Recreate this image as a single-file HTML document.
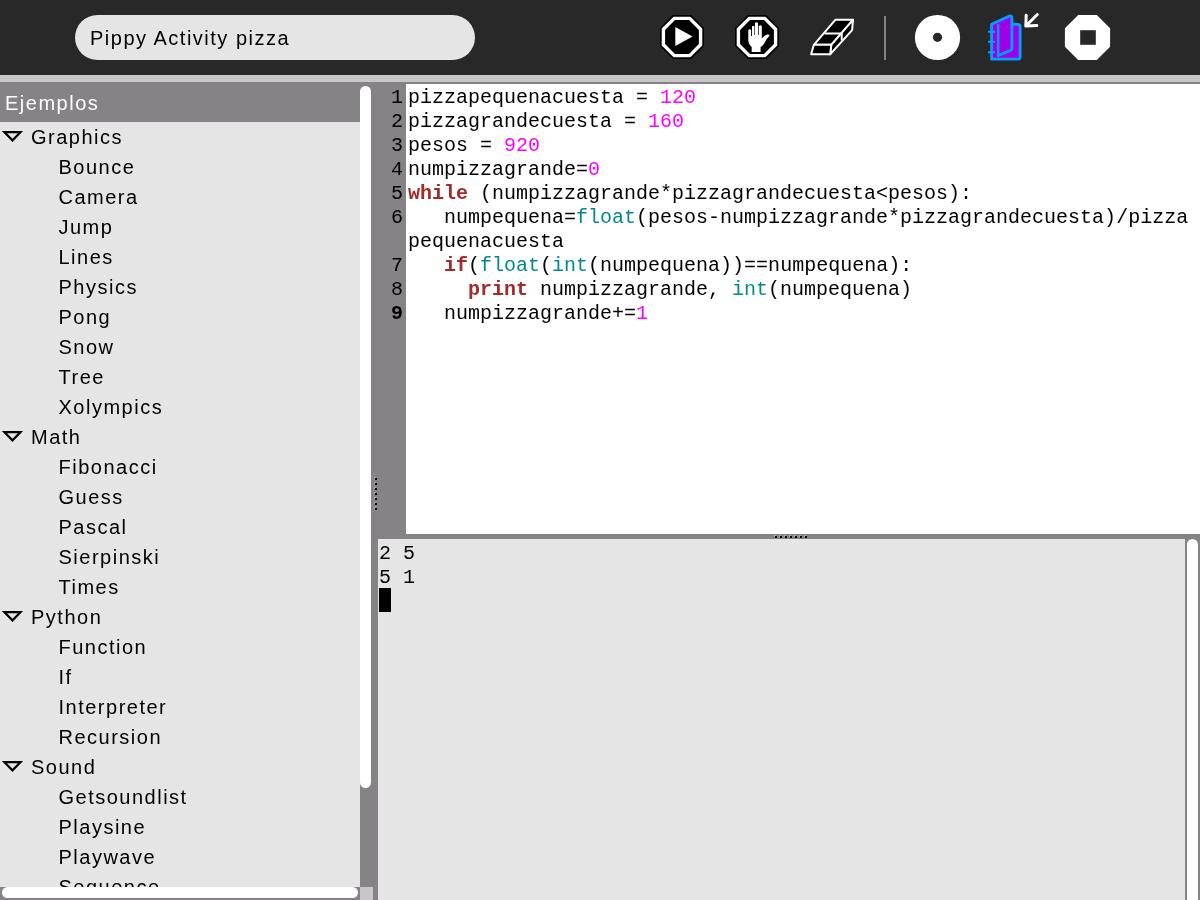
<!DOCTYPE html>
<html><head><meta charset="utf-8">
<style>
*{margin:0;padding:0;box-sizing:border-box}
html,body{width:1200px;height:900px;overflow:hidden;background:#868386;position:relative;font-family:"Liberation Sans",sans-serif}
.abs{position:absolute}
.code,.row,#hdr,#entrytxt,.ln{will-change:transform}
#toolbar{left:0;top:0;width:1200px;height:75px;background:#282828}
#strip{left:0;top:75px;width:1200px;height:7px;background:#c8c6c8}
#entry{left:75px;top:15px;width:400px;height:45px;border-radius:22.5px;background:#e5e5e5}
#entrytxt{left:90px;top:16px;height:45px;line-height:45px;font-size:20px;letter-spacing:1.5px;color:#000;white-space:pre}
#hdr{left:0;top:82px;width:360px;height:40px;background:#868386;color:#fff;font-size:20px;line-height:40px;padding-left:5px;padding-top:1px;letter-spacing:1.5px}
#list{left:0;top:122px;width:360px;height:765px;background:#e5e5e5;overflow:hidden}
.row{position:absolute;left:0;height:30px;line-height:30px;font-size:20px;color:#000;white-space:pre;letter-spacing:1.5px}
.cat{padding-left:31px}
.item{padding-left:58.5px}
.tri{position:absolute;left:0;top:9px;width:25px;height:12px}
#vsb{left:360px;top:86px;width:11px;height:702px;border-radius:5.5px;background:#fff}
#hsb{left:2px;top:887px;width:356px;height:11px;border-radius:5.5px;background:#fff}
#corner{left:360px;top:887px;width:13px;height:13px;background:#c8c6c8}
#editor{left:406px;top:84px;width:794px;height:450px;background:#fff}
.code{position:absolute;font-family:"Liberation Mono",monospace;font-size:20px;line-height:24px;white-space:pre;color:#000}
.ln{position:absolute;left:378px;width:25px;text-align:right;font-family:"Liberation Mono",monospace;font-size:20px;line-height:24px;color:#000}
.k{color:#a52a2a;font-weight:bold}
.b{color:#008a8c}
.n{color:#ff00ff}
#output{left:378px;top:539px;width:807px;height:361px;background:#e5e5e5}
#osb{left:1187px;top:539px;width:11px;height:372px;border-radius:5.5px;background:#fff}
#cursor{left:379px;top:588px;width:12px;height:24px;background:#000}
.dot{position:absolute;width:2px;height:2px;background:#000;box-shadow:-1px -1px 0 #a9a9a9}
</style></head>
<body>
<div id="toolbar" class="abs"></div>
<div id="entry" class="abs"></div>
<div id="entrytxt" class="abs">Pippy Activity pizza</div>
<svg class="abs" style="left:0;top:0" width="1200" height="75">
  <!-- play -->
  <polygon points="672.9,15 691.1,15 704,27.9 704,46.1 691.1,59 672.9,59 660,46.1 660,27.9" fill="#000"/>
  <polygon points="673.6,16.7 690.4,16.7 702.3,28.6 702.3,45.4 690.4,57.3 673.6,57.3 661.7,45.4 661.7,28.6" fill="#fff"/>
  <polygon points="675,20.1 689,20.1 698.9,30 698.9,44 689,53.9 675,53.9 665.1,44 665.1,30" fill="#000"/>
  <polygon points="675.3,27 675.3,46 692.6,36.5" fill="#fff"/>
  <!-- hand -->
  <polygon points="747.9,15 766.1,15 779,27.9 779,46.1 766.1,59 747.9,59 735,46.1 735,27.9" fill="#000"/>
  <polygon points="748.6,16.7 765.4,16.7 777.3,28.6 777.3,45.4 765.4,57.3 748.6,57.3 736.7,45.4 736.7,28.6" fill="#fff"/>
  <polygon points="750,20.1 764,20.1 773.9,30 773.9,44 764,53.9 750,53.9 740.1,44 740.1,30" fill="#000"/>
  <path d="M751.7,52 L751.7,47 Q748.3,44 748.3,40 L748.3,30 Q749.7,28.6 751.1,30 L751.1,36 L752,36 L752,26.5 Q753.2,25 754.4,26.5 L754.4,35 L755,35 L755,23 Q756.5,21.5 758,23 L758,35 L758.7,35 L758.7,26 Q760.2,24.5 761.8,26 L761.8,38.5 Q764,35.5 767,34.5 Q769.7,34 769.5,35.8 Q766,39 764.5,43 Q762.5,46.5 760.6,47 L760.6,52 Z" fill="#fff"/>
  <!-- eraser -->
  <g fill="#000" stroke="#fff" stroke-width="2" stroke-linejoin="round">
    <path d="M835.3,19.8 L853,19.8 L831.3,44.8 L813.9,44.8 Z"/>
    <path d="M853,19.8 L852.1,30.2 L830.1,54.3 L831.3,44.8 Z"/>
    <path d="M813.9,44.8 L831.3,44.8 L830.1,54.3 L811.1,54.3 Z"/>
    <path d="M824.6,33.5 L841.7,33.5 L841.7,40.6" fill="none"/>
  </g>
  <!-- separator -->
  <rect x="884" y="16" width="2" height="44" fill="#868386"/>
  <!-- record circle -->
  <circle cx="937.5" cy="37.5" r="22.6" fill="#fff"/>
  <circle cx="937.5" cy="37.3" r="4.6" fill="#282828"/>
  <!-- journal -->
  <g transform="translate(980,5)" stroke="#00a0ff" stroke-width="2.8" stroke-linejoin="round" stroke-linecap="round">
    <path d="M11.6,19.3 L29.5,11 Q31.9,10.2 31.9,12.8 L31.9,19.3 L38,19.3 Q40.1,19.3 40.1,21.5 L40.1,52 Q40.1,54.2 38,54.2 L11.6,54.2 Z" fill="#a000e8"/>
    <path d="M18.2,19.8 L18.2,50.2" fill="none" stroke-width="2.2"/>
    <path d="M31.9,19.3 L31.9,43.5 Q31.9,44.8 30.5,45.4 L18.2,50.5" fill="none"/>
    <path d="M8,26.7 L15,26.7 M8,36.8 L15,36.8 M8,47.3 L15,47.3" fill="none" stroke-width="2" stroke-linecap="butt"/>
  </g>
  <g stroke="#fff" stroke-width="3" fill="none" stroke-linecap="round" stroke-linejoin="round">
    <path d="M1026.2,15.3 L1025.8,26 L1036.8,25.6 M1025.8,26 L1037.3,14.5"/>
  </g>
  <!-- stop -->
  <polygon points="1078.2,14.9 1096.8,14.9 1110.1,28.2 1110.1,46.8 1096.8,60.1 1078.2,60.1 1064.9,46.8 1064.9,28.2" fill="#fff"/>
  <rect x="1080.2" y="30.2" width="15.6" height="14.6" fill="#282828"/>
</svg>
<div id="strip" class="abs"></div>

<div id="hdr" class="abs">Ejemplos</div>
<div id="list" class="abs">
<div class="row cat" style="top:0px"><svg class="tri" viewBox="0 0 25 12"><path d="M1.8,0 L23.1,0 L12.45,11 Z M6.99,2.2 L17.91,2.2 L12.45,7.84 Z" fill="#000" fill-rule="evenodd"/></svg>Graphics</div>
<div class="row item" style="top:30px">Bounce</div>
<div class="row item" style="top:60px">Camera</div>
<div class="row item" style="top:90px">Jump</div>
<div class="row item" style="top:120px">Lines</div>
<div class="row item" style="top:150px">Physics</div>
<div class="row item" style="top:180px">Pong</div>
<div class="row item" style="top:210px">Snow</div>
<div class="row item" style="top:240px">Tree</div>
<div class="row item" style="top:270px">Xolympics</div>
<div class="row cat" style="top:300px"><svg class="tri" viewBox="0 0 25 12"><path d="M1.8,0 L23.1,0 L12.45,11 Z M6.99,2.2 L17.91,2.2 L12.45,7.84 Z" fill="#000" fill-rule="evenodd"/></svg>Math</div>
<div class="row item" style="top:330px">Fibonacci</div>
<div class="row item" style="top:360px">Guess</div>
<div class="row item" style="top:390px">Pascal</div>
<div class="row item" style="top:420px">Sierpinski</div>
<div class="row item" style="top:450px">Times</div>
<div class="row cat" style="top:480px"><svg class="tri" viewBox="0 0 25 12"><path d="M1.8,0 L23.1,0 L12.45,11 Z M6.99,2.2 L17.91,2.2 L12.45,7.84 Z" fill="#000" fill-rule="evenodd"/></svg>Python</div>
<div class="row item" style="top:510px">Function</div>
<div class="row item" style="top:540px">If</div>
<div class="row item" style="top:570px">Interpreter</div>
<div class="row item" style="top:600px">Recursion</div>
<div class="row cat" style="top:630px"><svg class="tri" viewBox="0 0 25 12"><path d="M1.8,0 L23.1,0 L12.45,11 Z M6.99,2.2 L17.91,2.2 L12.45,7.84 Z" fill="#000" fill-rule="evenodd"/></svg>Sound</div>
<div class="row item" style="top:660px">Getsoundlist</div>
<div class="row item" style="top:690px">Playsine</div>
<div class="row item" style="top:720px">Playwave</div>
<div class="row item" style="top:750px">Sequence</div>
</div>
<div id="vsb" class="abs"></div>
<div id="hsb" class="abs"></div>
<div id="corner" class="abs"></div>

<div id="editor" class="abs"></div>
<div id="output" class="abs"></div>
<div id="osb" class="abs"></div>
<div id="cursor" class="abs"></div>
<div class="code" style="left:408px;top:86px">pizzapequenacuesta = <span class="n">120</span></div>
<div class="code" style="left:408px;top:110px">pizzagrandecuesta = <span class="n">160</span></div>
<div class="code" style="left:408px;top:134px">pesos = <span class="n">920</span></div>
<div class="code" style="left:408px;top:158px">numpizzagrande=<span class="n">0</span></div>
<div class="code" style="left:408px;top:182px"><span class="k">while</span> (numpizzagrande*pizzagrandecuesta&lt;pesos):</div>
<div class="code" style="left:408px;top:206px">   numpequena=<span class="b">float</span>(pesos-numpizzagrande*pizzagrandecuesta)/pizza</div>
<div class="code" style="left:408px;top:230px">pequenacuesta</div>
<div class="code" style="left:408px;top:254px">   <span class="k">if</span>(<span class="b">float</span>(<span class="b">int</span>(numpequena))==numpequena):</div>
<div class="code" style="left:408px;top:278px">     <span class="k">print</span> numpizzagrande, <span class="b">int</span>(numpequena)</div>
<div class="code" style="left:408px;top:302px">   numpizzagrande+=<span class="n">1</span></div>
<div class="ln" style="top:86px">1</div>
<div class="ln" style="top:110px">2</div>
<div class="ln" style="top:134px">3</div>
<div class="ln" style="top:158px">4</div>
<div class="ln" style="top:182px">5</div>
<div class="ln" style="top:206px">6</div>
<div class="ln" style="top:254px">7</div>
<div class="ln" style="top:278px">8</div>
<div class="ln" style="font-weight:bold;top:302px">9</div>
<div class="code" style="left:379px;top:542px">2 5</div>
<div class="code" style="left:379px;top:566px">5 1</div>
<div class="dot" style="left:775px;top:536px"></div>
<div class="dot" style="left:780px;top:536px"></div>
<div class="dot" style="left:785px;top:536px"></div>
<div class="dot" style="left:790px;top:536px"></div>
<div class="dot" style="left:795px;top:536px"></div>
<div class="dot" style="left:800px;top:536px"></div>
<div class="dot" style="left:805px;top:536px"></div>
<div class="dot" style="left:375px;top:478px"></div>
<div class="dot" style="left:375px;top:483px"></div>
<div class="dot" style="left:375px;top:488px"></div>
<div class="dot" style="left:375px;top:493px"></div>
<div class="dot" style="left:375px;top:498px"></div>
<div class="dot" style="left:375px;top:503px"></div>
<div class="dot" style="left:375px;top:508px"></div>
</body></html>
